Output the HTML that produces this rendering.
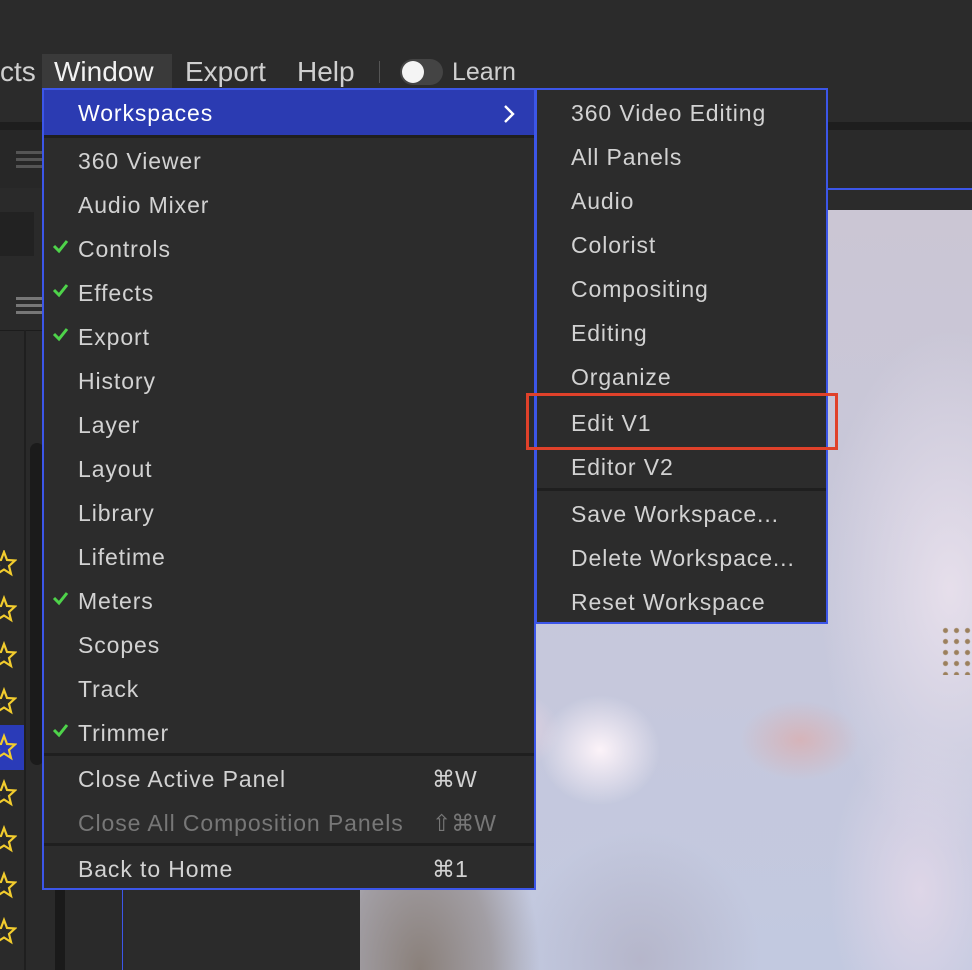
<!DOCTYPE html>
<html><head><meta charset="utf-8"><style>
*{margin:0;padding:0;box-sizing:border-box}
body{width:972px;height:970px;overflow:hidden;background:#2b2b2b;position:relative;font-family:"Liberation Sans",sans-serif;color:#d4d4d4}
.a{position:absolute}
.mb{top:54px;font-size:28px;color:#cfcfcf;line-height:36px}
.menu{position:absolute;background:#2c2c2c;border:2px solid #3c56e8}
.it{position:absolute;left:34px;font-size:23px;letter-spacing:0.9px;line-height:46px;height:44px;color:#d2d2d2;white-space:nowrap}
.sc{position:absolute;font-size:23px;line-height:46px;color:#d2d2d2}
.sep{position:absolute;left:0;right:0;height:3px;background:#1f1f1f}
</style></head><body>
<div class="a" style="left:0;top:0;width:972px;height:122px;background:#2b2b2b"></div>
<div class="a" style="left:0;top:122px;width:972px;height:8px;background:#1e1e1e"></div>
<div class="a" style="left:0;top:130px;width:972px;height:58px;background:#272727"></div>
<div class="a" style="left:16px;top:151px;width:26px;height:3px;background:#555;box-shadow:0 7px 0 #555,0 14px 0 #555"></div>
<div class="a" style="left:0;top:188px;width:127px;height:782px;background:#2a2a2a"></div>
<div class="a" style="left:0;top:212px;width:34px;height:44px;background:#222"></div>
<div class="a" style="left:16px;top:297px;width:26px;height:3px;background:#777;box-shadow:0 7px 0 #777,0 14px 0 #777"></div>
<div class="a" style="left:0;top:330px;width:127px;height:1px;background:#1c1c1c"></div>
<div class="a" style="left:24px;top:330px;width:2px;height:640px;background:#1f1f1f"></div>
<div class="a" style="left:30px;top:443px;width:14px;height:322px;background:#1b1b1b;border-radius:8px"></div>
<div class="a" style="left:55px;top:890px;width:10px;height:80px;background:#1a1a1a"></div>
<div class="a" style="left:0;top:725px;width:24px;height:45px;background:#2a3bb8"></div>
<div class="a" style="left:122px;top:890px;width:1px;height:80px;background:#3c56e8"></div>
<div class="a" style="left:127px;top:188px;width:233px;height:782px;background:#2b2b2b"></div>
<div class="a" style="left:828px;top:188px;width:144px;height:2px;background:#3c56e8"></div>
<div class="a" style="left:828px;top:130px;width:144px;height:58px;background:#2a2a2a"></div>
<!-- image -->
<div class="a" style="left:360px;top:210px;width:612px;height:760px;background:
radial-gradient(ellipse 130px 260px at 590px 380px,rgba(232,224,236,0.95),rgba(0,0,0,0) 100%),
radial-gradient(ellipse 90px 160px at 560px 680px,rgba(225,215,232,0.9),rgba(0,0,0,0) 100%),
radial-gradient(ellipse 60px 55px at 240px 540px,rgba(255,245,250,0.95),rgba(0,0,0,0) 100%),
radial-gradient(ellipse 50px 40px at 150px 520px,rgba(240,215,225,0.8),rgba(0,0,0,0) 100%),
radial-gradient(ellipse 60px 40px at 440px 530px,rgba(230,160,150,0.5),rgba(0,0,0,0) 100%),
radial-gradient(ellipse 60px 40px at 80px 630px,rgba(60,50,45,0.8),rgba(0,0,0,0) 100%),
radial-gradient(ellipse 120px 200px at 60px 760px,#8a807a 0%,rgba(140,130,125,0.6) 60%,rgba(0,0,0,0) 100%),
radial-gradient(ellipse 120px 130px at 280px 750px,rgba(180,180,200,0.9),rgba(0,0,0,0) 100%),
linear-gradient(180deg,#cbc6d4 0%,#c6c8dc 60%,#c2c9e0 100%)"></div>
<div class="a" style="left:940px;top:625px;width:32px;height:50px;background:radial-gradient(circle,#8b6a3a 0 2px,transparent 3px) 0 0/11px 11px;opacity:.8"></div>
<!-- menubar -->
<div class="a mb" style="left:0">cts</div>
<div class="a" style="left:42px;top:54px;width:130px;height:34px;background:#3a3a3a"></div>
<div class="a mb" style="left:54px;color:#f2f2f2">Window</div>
<div class="a mb" style="left:185px">Export</div>
<div class="a mb" style="left:297px">Help</div>
<div class="a" style="left:379px;top:61px;width:1px;height:22px;background:#555"></div>
<div class="a" style="left:400px;top:59px;width:43px;height:26px;background:#444;border-radius:13px"></div>
<div class="a" style="left:402px;top:61px;width:22px;height:22px;background:#f4f4f4;border-radius:50%"></div>
<div class="a mb" style="left:452px;font-size:25px">Learn</div>
<!-- stars -->
<svg class="a" style="left:-9px;top:550px" width="26" height="400" viewBox="0 0 26 400" fill="none" stroke="#f2cc2e" stroke-width="2.2">
<g id="s"><path d="M13 2 L16 10 L24 10.5 L18 16 L20 24 L13 19.5 L6 24 L8 16 L2 10.5 L10 10 Z"/></g>
<use href="#s" y="46"/><use href="#s" y="92"/><use href="#s" y="138"/><use href="#s" y="184"/><use href="#s" y="230"/><use href="#s" y="276"/><use href="#s" y="322"/><use href="#s" y="368"/>
</svg>
<!-- main menu -->
<div class="menu" style="left:42px;top:88px;width:494px;height:802px">
<div class="a" style="left:0;top:0;width:490px;height:45px;background:#2b3bb2"></div>
<div class="it" style="top:0;color:#fff">Workspaces</div>
<svg class="a" style="left:458px;top:14px" width="14" height="20"><path d="M3 2 L11 10 L3 18" stroke="#fff" stroke-width="2.4" fill="none"/></svg>
<div class="sep" style="top:45px"></div>
<div class="it" style="top:48px">360 Viewer</div>
<div class="it" style="top:92px">Audio Mixer</div>
<div class="it" style="top:136px">Controls</div>
<div class="it" style="top:180px">Effects</div>
<div class="it" style="top:224px">Export</div>
<div class="it" style="top:268px">History</div>
<div class="it" style="top:312px">Layer</div>
<div class="it" style="top:356px">Layout</div>
<div class="it" style="top:400px">Library</div>
<div class="it" style="top:444px">Lifetime</div>
<div class="it" style="top:488px">Meters</div>
<div class="it" style="top:532px">Scopes</div>
<div class="it" style="top:576px">Track</div>
<div class="it" style="top:620px">Trimmer</div>
<div class="sep" style="top:663px"></div>
<div class="it" style="top:666px">Close Active Panel</div><div class="sc" style="left:388px;top:666px">⌘W</div>
<div class="it" style="top:710px;color:#777">Close All Composition Panels</div><div class="sc" style="left:388px;top:710px;color:#777">⇧⌘W</div>
<div class="sep" style="top:753px"></div>
<div class="it" style="top:756px">Back to Home</div><div class="sc" style="left:388px;top:756px">⌘1</div>
<svg class="a" style="left:8px;top:4px" width="20" height="700" fill="none" stroke="#4ed34a" stroke-width="3">
<path d="M2 152 L7 157 L15 147"/><path d="M2 196 L7 201 L15 191"/><path d="M2 240 L7 245 L15 235"/><path d="M2 504 L7 509 L15 499"/><path d="M2 636 L7 641 L15 631"/>
</svg>
</div>
<!-- submenu -->
<div class="menu" style="left:535px;top:88px;width:293px;height:536px">
<div class="it" style="top:0">360 Video Editing</div>
<div class="it" style="top:44px">All Panels</div>
<div class="it" style="top:88px">Audio</div>
<div class="it" style="top:132px">Colorist</div>
<div class="it" style="top:176px">Compositing</div>
<div class="it" style="top:220px">Editing</div>
<div class="it" style="top:264px">Organize</div>
<div class="it" style="top:310px">Edit V1</div>
<div class="it" style="top:354px">Editor V2</div>
<div class="sep" style="top:398px"></div>
<div class="it" style="top:401px">Save Workspace...</div>
<div class="it" style="top:445px">Delete Workspace...</div>
<div class="it" style="top:489px">Reset Workspace</div>
</div>
<div class="a" style="left:526px;top:393px;width:312px;height:57px;border:3px solid #e0412a"></div>
</body></html>
